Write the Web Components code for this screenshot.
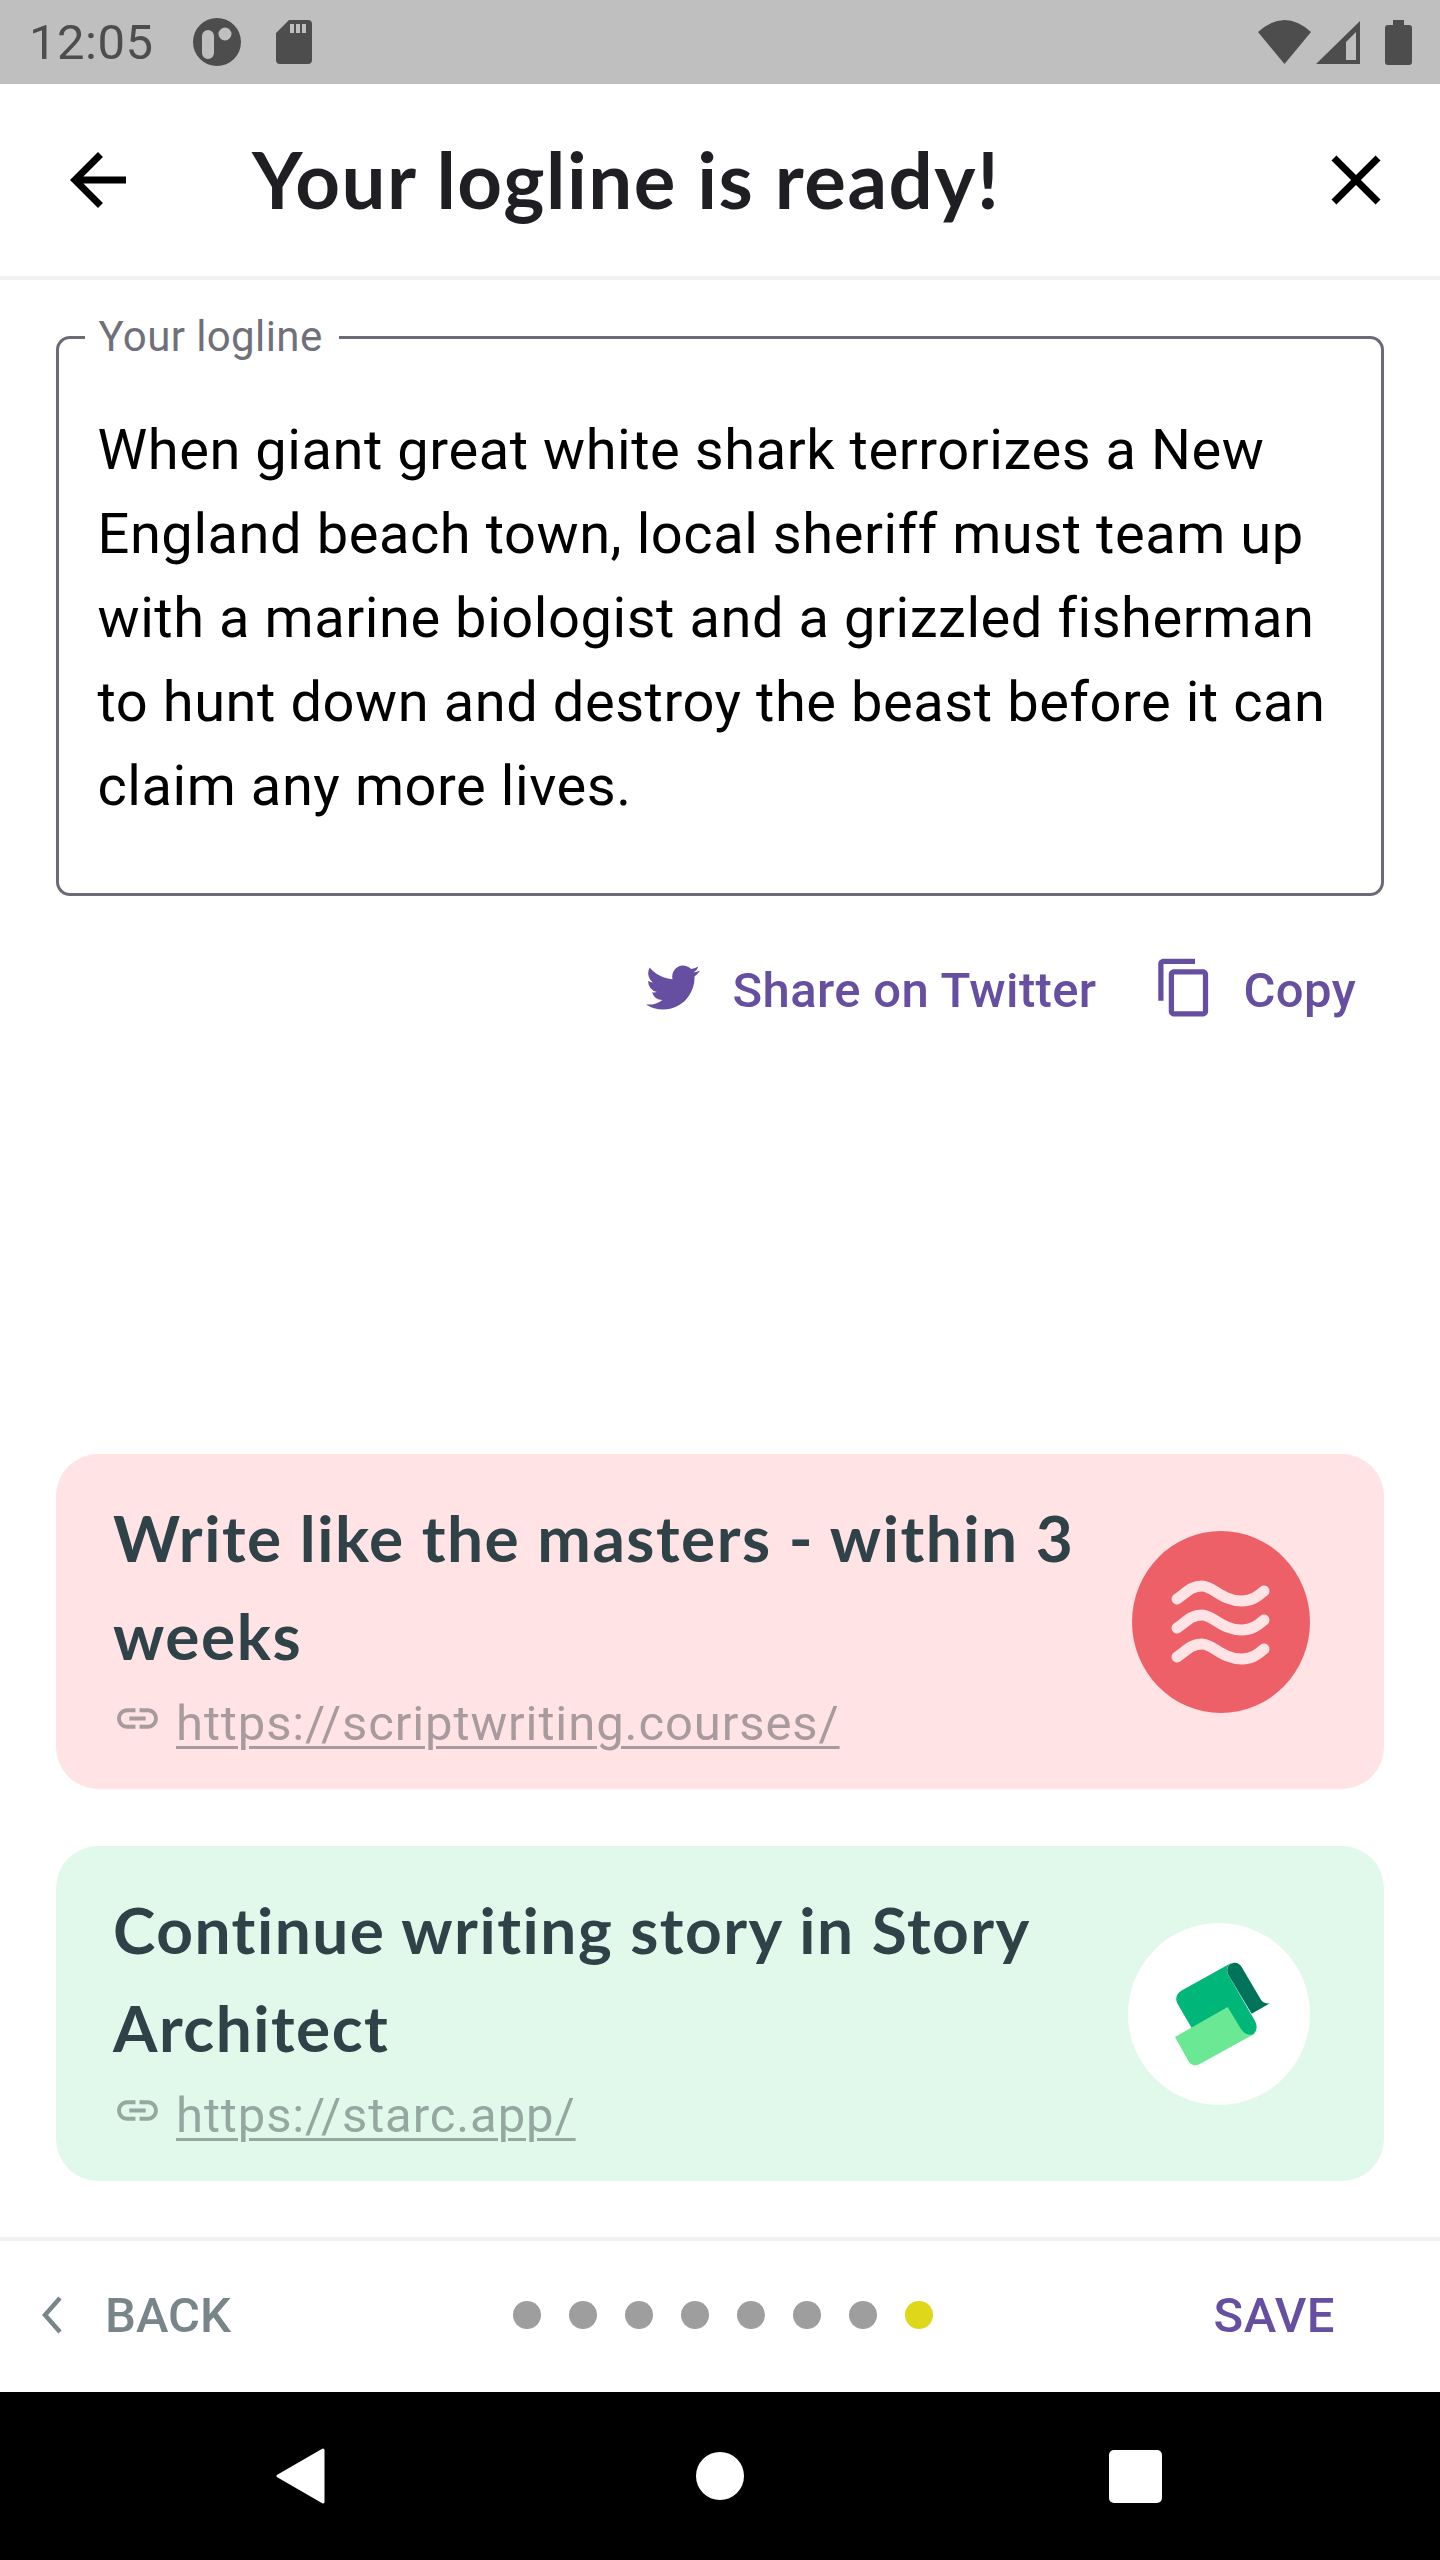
<!DOCTYPE html>
<html>
<head>
<meta charset="utf-8">
<title>Your logline is ready!</title>
<style>
  html, body { margin: 0; background: #fff; }
  body { font-family: Roboto, sans-serif; }
</style>
</head>
<body>
<logline-screen>
  <status-bar slot="status"></status-bar>
  <title-bar slot="title">Your logline is ready!</title-bar>
  <logline-field label="Your logline">When giant great white shark terrorizes a New England beach town, local sheriff must team up with a marine biologist and a grizzled fisherman to hunt down and destroy the beast before it can claim any more lives.</logline-field>
  <action-row>
    <action-button icon="twitter">Share on Twitter</action-button>
    <action-button icon="copy">Copy</action-button>
  </action-row>
  <promo-card slot="promos" tone="red" logo="waves" href="https://scriptwriting.courses/">Write like the masters - within 3 weeks</promo-card>
  <promo-card slot="promos" tone="green" logo="starc" href="https://starc.app/">Continue writing story in Story Architect</promo-card>
  <pager-bar slot="pager" count="8" current="7"></pager-bar>
  <nav-bar slot="nav"></nav-bar>
</logline-screen>

<script>
function define(name, css, html, setup) {
  customElements.define(name, class extends HTMLElement {
    constructor() {
      super();
      this.attachShadow({ mode: "open" }).innerHTML = `<style>${css}</style>${html}`;
    }
    connectedCallback() {
      if (setup) setup(this, this.shadowRoot);
    }
  });
}

define("logline-screen", `
  :host { display: flex; flex-direction: column; width: 1440px; height: 2560px; overflow: hidden; background: #fff; }
  main { flex: 1; display: flex; flex-direction: column; padding: 36px 56px 56px; min-height: 0; }
  .spacer { flex: 1; }
  .promos { display: flex; flex-direction: column; gap: 57px; }
`, `
  <slot name="status"></slot>
  <slot name="title"></slot>
  <main>
    <slot></slot>
    <div class="spacer"></div>
    <div class="promos"><slot name="promos"></slot></div>
  </main>
  <slot name="pager"></slot>
  <slot name="nav"></slot>
`);

define("status-bar", `
  :host { display: flex; align-items: center; height: 84px; padding: 0 28px 0 29px; background: #bfbfbf; color: #4d4d4d; box-sizing: border-box; font: 400 49px/84px Roboto, sans-serif; letter-spacing: .5px; }
  svg { display: block; fill: currentColor; flex: none; }
  .time { width: 123px; margin-top: 2px; }
  .grow { flex: 1; }
`, `
  <span class="time">12:05</span>
  <svg style="margin-left:41px" width="48" height="48" viewBox="0 0 48 48"><path fill-rule="evenodd" d="M24 0a24 24 0 1 1 0 48a24 24 0 0 1 0-48zM15 12a6 6 0 0 0-6 6v17a6 6 0 0 0 12 0V18a6 6 0 0 0-6-6zM32 9.500a6.500 6.500 0 1 0 0 13a6.500 6.500 0 0 0 0-13z"/></svg>
  <svg style="margin-left:35px" width="36" height="44" viewBox="0 0 36 44"><path fill-rule="evenodd" d="M13 0H32a4 4 0 0 1 4 4V40a4 4 0 0 1-4 4H4a4 4 0 0 1-4-4V13zM14 4V13H18V4zM20 4V13H24V4zM26 4V13H30V4z"/></svg>
  <div class="grow"></div>
  <svg width="53" height="44" viewBox="0 0 53 44"><path d="M0 12Q26.500-12 53 12L26.500 44Z"/></svg>
  <svg style="margin-left:5px" width="44" height="43" viewBox="0 0 44 43"><path fill-rule="evenodd" d="M44 0V43H0ZM30 39H40V11L30 21Z"/></svg>
  <svg style="margin-left:25px" width="27" height="45" viewBox="0 0 27 45"><path d="M8 0H19V5H24a3 3 0 0 1 3 3V42a3 3 0 0 1-3 3H3a3 3 0 0 1-3-3V8a3 3 0 0 1 3-3H8Z"/></svg>
`);

define("title-bar", `
  :host { display: flex; align-items: center; height: 196px; padding: 0 42px 0 56px; border-bottom: 4px solid #f1f1f1; box-sizing: border-box; background: #fff; }
  svg { display: block; flex: none; }
  h1 { flex: 1; margin: -2px 0 0 112px; font: 700 78px/1 Lato, sans-serif; letter-spacing: 1.500px; color: #1f1f23; white-space: nowrap; }
`, `
  <svg width="84" height="84" viewBox="0 0 24 24"><path d="M20 11H7.830l5.590-5.590L12 4l-8 8 8 8 1.410-1.410L7.830 13H20v-2z"/></svg>
  <h1><slot></slot></h1>
  <svg width="84" height="84" viewBox="0 0 24 24"><path d="M19 6.410L17.590 5 12 10.590 6.410 5 5 6.410 10.590 12 5 17.590 6.410 19 12 13.410 17.590 19 19 17.590 13.410 12z"/></svg>
`);

define("logline-field", `
  :host { display: block; }
  fieldset { margin: 0; padding: 50px 38px 26px 38.500px; border: 3.500px solid #6b6b78; border-radius: 14px; min-inline-size: 0; height: 580px; box-sizing: border-box; }
  legend { margin-left: -13px; padding: 0 16px 0 14px; font: 400 42px/42px Roboto, sans-serif; letter-spacing: .4px; color: #6f7079; }
  p { margin: 0; font: 400 56px/84px Roboto, sans-serif; letter-spacing: .56px; color: #000; }
`, `
  <fieldset>
    <legend></legend>
    <p><slot></slot></p>
  </fieldset>
`, (el, root) => {
  root.querySelector("legend").textContent = el.getAttribute("label");
});

define("action-row", `
  :host { display: flex; justify-content: flex-end; gap: 56px; padding: 53px 28px 0 0; }
`, `<slot></slot>`);

const actionIcons = {
  twitter: `<svg width="54" height="45" viewBox="0 2 24 20"><path d="M23.953 4.570a10 10 0 01-2.825.775 4.958 4.958 0 002.163-2.723c-.951.555-2.005.959-3.127 1.184a4.920 4.920 0 00-8.384 4.482C7.690 8.095 4.067 6.130 1.640 3.162a4.822 4.822 0 00-.666 2.475c0 1.710.870 3.213 2.188 4.096a4.904 4.904 0 01-2.228-.616v.060a4.923 4.923 0 003.946 4.827 4.996 4.996 0 01-2.212.085 4.936 4.936 0 004.604 3.417 9.867 9.867 0 01-6.102 2.105c-.390 0-.779-.023-1.170-.067a13.995 13.995 0 007.557 2.209c9.053 0 13.998-7.496 13.998-13.985 0-.210 0-.420-.015-.630A9.935 9.935 0 0024 4.590z"/></svg>`,
  copy: `<svg width="63" height="63" viewBox="0 0 24 24"><path d="M16 1H4c-1.100 0-2 .9-2 2v14h2V3h12V1zm3 4H8c-1.100 0-2 .9-2 2v14c0 1.100.9 2 2 2h11c1.100 0 2-.9 2-2V7c0-1.100-.9-2-2-2zm0 16H8V7h11v14z"/></svg>`
};

define("action-button", `
  :host { display: flex; align-items: center; gap: 28px; height: 84px; color: #664fa1; font: 500 49px/84px Roboto, sans-serif; letter-spacing: .35px; white-space: nowrap; }
  :host([icon="twitter"]) { gap: 33px; }
  .icon { display: block; margin-top: -8px; }
  svg { display: block; fill: currentColor; flex: none; }
`, `<span class="icon"></span><slot></slot>`, (el, root) => {
  root.querySelector(".icon").innerHTML = actionIcons[el.getAttribute("icon")];
});

const promoLogos = {
  waves: `<svg width="178" height="182" viewBox="2 0 178 182"><g fill="none" stroke="#ffe3e5" stroke-width="11" stroke-linecap="round"><path d="M47 68C56 62 61 55 72 55S92 70 112 70C122 70 128 65 134 60"/><path d="M47 97C56 91 61 84 72 84S92 99 112 99C122 99 128 94 134 89"/><path d="M47 126C56 120 61 113 72 113S92 128 112 128C122 128 128 123 134 118"/></g></svg>`,
  starc: `<svg width="182" height="182" viewBox="144 1052.600 546 432" preserveAspectRatio="none">
    <path fill="#01735a" d="M442 1172Q438 1150 462 1147Q476 1146 484 1156L538 1228Q548 1246 570 1243L515 1268Z"/>
    <path fill="#00b679" d="M305 1213L448 1150Q455 1147 462 1147Q438 1150 442 1172L525 1285Q538 1305 518 1318L400 1340L335 1302L293 1245Q280 1225 305 1213Z"/>
    <path fill="#6ae894" d="M285 1323L443 1252L482 1303Q500 1325 525 1315L365 1385Q340 1398 325 1380Z"/>
  </svg>`
};

define("promo-card", `
  :host { display: flex; align-items: center; height: 335px; border-radius: 42px; padding: 0 74px 0 57px; box-sizing: border-box; }
  :host([tone="red"]) { background: #ffe3e5; --logo: #ee6067; --logo-w: 178px; }
  :host([tone="green"]) { background: #e1f9ea; --logo: #fff; --logo-w: 182px; }
  .text { flex: 1; min-width: 0; padding-top: 4px; }
  h2 { margin: 0; font: 700 64px/98px Lato, sans-serif; letter-spacing: 1.500px; color: #2f4248; }
  a { display: flex; align-items: center; gap: 14px; height: 70px; padding-top: 4px; font: 400 49px/70px Roboto, sans-serif; letter-spacing: .9px; color: rgba(46, 56, 60, .42); }
  a span { text-decoration: underline; text-decoration-thickness: 3px; text-underline-offset: 6px; }
  a svg { display: block; fill: currentColor; flex: none; margin-top: -10px; }
  .logo { flex: none; width: var(--logo-w); height: 182px; border-radius: 50%; background: var(--logo); }
  .logo svg { display: block; }
`, `
  <div class="text">
    <h2><slot></slot></h2>
    <a><svg width="49" height="49" viewBox="0 0 24 24"><path d="M3.900 12c0-1.710 1.390-3.100 3.100-3.100h4V7H7c-2.760 0-5 2.240-5 5s2.240 5 5 5h4v-1.900H7c-1.710 0-3.100-1.390-3.100-3.100zM8 13h8v-2H8v2zm9-6h-4v1.900h4c1.710 0 3.100 1.390 3.100 3.100s-1.390 3.100-3.100 3.100h-4V17h4c2.760 0 5-2.240 5-5s-2.240-5-5-5z"/></svg><span></span></a>
  </div>
  <div class="logo"></div>
`, (el, root) => {
  root.querySelector("a span").textContent = el.getAttribute("href");
  root.querySelector(".logo").innerHTML = promoLogos[el.getAttribute("logo")];
});

define("pager-bar", `
  :host { display: grid; grid-template-columns: 513px auto 1fr; align-items: center; height: 155px; padding-bottom: 3px; border-top: 4px solid #f1f1f1; box-sizing: border-box; font: 500 49px/1 Roboto, sans-serif; }
  .back { display: flex; align-items: center; gap: 43px; padding-left: 42px; color: #78868a; }
  .dots { display: flex; gap: 28px; }
  .dots i { width: 28px; height: 28px; border-radius: 50%; background: #9e9e9e; }
  .dots i.on { background: #dfd81a; }
  .save { justify-self: end; padding-right: 105px; color: #664fa1; letter-spacing: .5px; }
  svg { display: block; flex: none; }
`, `
  <div class="back"><svg width="20" height="38" viewBox="0 0 20 38"><path d="M18 2L3 19L18 36" fill="none" stroke="currentColor" stroke-width="4.500"/></svg><span>BACK</span></div>
  <div class="dots"></div>
  <div class="save">SAVE</div>
`, (el, root) => {
  const dots = root.querySelector(".dots");
  const current = Number(el.getAttribute("current"));
  for (let i = 0; i < Number(el.getAttribute("count")); i++) {
    const dot = document.createElement("i");
    if (i === current) dot.className = "on";
    dots.appendChild(dot);
  }
});

define("nav-bar", `
  :host { display: flex; align-items: center; height: 168px; padding-left: 275px; background: #000; box-sizing: border-box; }
  svg { display: block; fill: #fff; flex: none; }
`, `
  <svg width="50" height="56" viewBox="0 0 50 56"><path d="M48 2L3 28L48 54Z" stroke="#fff" stroke-width="3" stroke-linejoin="round"/></svg>
  <svg style="margin-left:371px" width="48" height="48" viewBox="0 0 48 48"><circle cx="24" cy="24" r="24"/></svg>
  <svg style="margin-left:365px" width="53" height="53" viewBox="0 0 53 53"><rect width="53" height="53" rx="5"/></svg>
`);
</script>
</body>
</html>
